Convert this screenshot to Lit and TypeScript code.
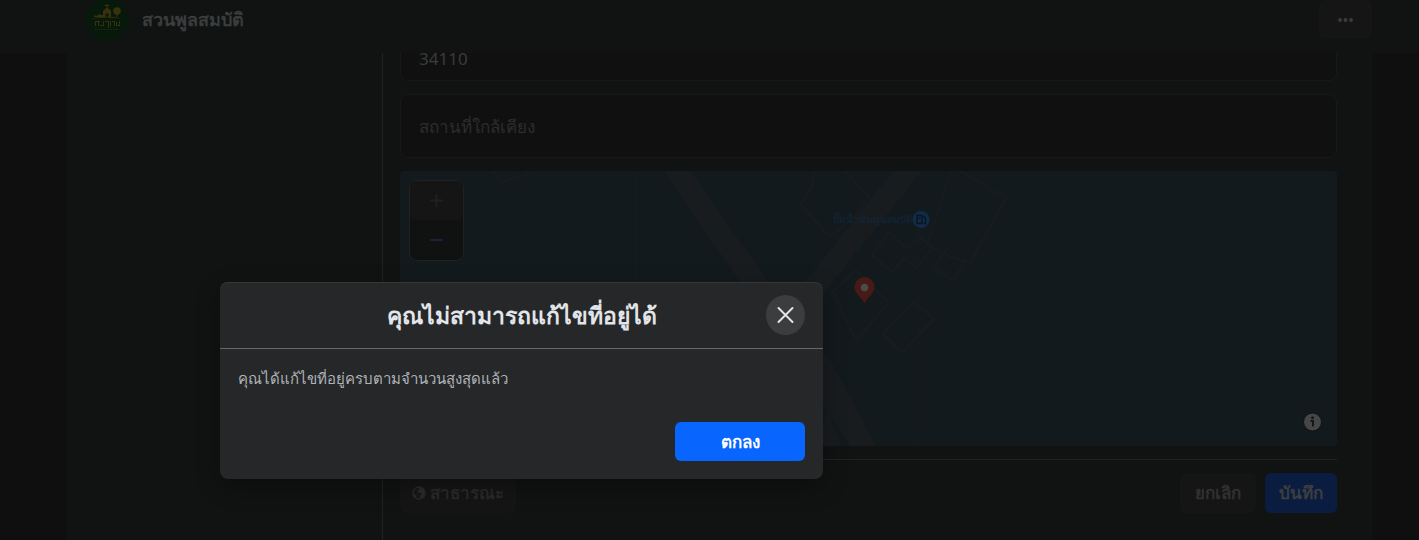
import { LitElement, html, css } from "lit";
import { customElement, state } from "lit/decorators.js";

const fontStack = css`"Noto Sans", "DejaVu Sans", sans-serif`;

@customElement("address-map")
class AddressMap extends LitElement {
  static styles = css`
    :host { display: block; font-family: ${fontStack}; }
    .map { position: relative; height: 275px; overflow: hidden; border-radius: 4px; background: #131a1d; }
    .tiles { position: absolute; top: 0; left: 0; width: 937px; height: 275px; }
    .label { font-size: 10px; fill: #10263c; }
    .zoom { position: absolute; top: 9px; left: 9px; width: 55px; box-sizing: border-box; border: 1px solid #202221; border-radius: 8px; background: #0f1211; overflow: hidden; }
    .zoom button { display: grid; place-items: center; width: 100%; height: 39px; padding: 0; border: 0; background: none; }
    .zoom button[disabled] { background: #151515; border-radius: 6px; }
    .zoom button + button { height: 40px; }
    .info { position: absolute; right: 15px; bottom: 14px; width: 19px; height: 20px; padding: 0; border: 0; background: none; display: grid; place-items: center; }
  `;
  render() {
    return html`<div class="map">
      <svg class="tiles" viewBox="0 0 937 275" aria-hidden="true">
        <g fill="#191c1f">
          <path d="M264 0H291L368 111L432 192L476 275H450L424 237L340 111Z" />
          <path d="M493 0H522L432 111L396 160L405 111Z" />
          <path d="M428 240L441 275H410Z" />
        </g>
        <g fill="none" stroke="#181c1f" stroke-width="2">
          <path d="M94 0L101 11L129 3L127 0" />
          <path d="M415 0L411 17L401 34L430 66L464 38M445 0L469 26L452 48" />
          <path d="M560 0L606 27L570 92L551 86L527 74L551 0M548 77L533 97L553 109L566 88" />
          <path d="M489 61L472 84L492 101L504 87L517 97L533 76L519 66L507 78Z" />
          <path d="M433 121L456 99L489 132L456 169Z" />
          <path d="M514 131L534 148L502 182L483 163Z" />
        </g>
        <g stroke="#161c1e"><path d="M236.500 0V275M518.500 0V275" /></g>
        <text class="label" x="433" y="52">ปั๊มน้ำมันพูนสมบัติ</text>
        <circle cx="521" cy="48.500" r="8.500" fill="#102c49" />
        <path d="M517 44.500h5v8h-5zM518.500 47h2M523.500 45l2 2v5.500h-2" fill="none" stroke="#091521" stroke-width="1.400" />
        <path d="M464.500 133c-2-6-10-10-10-17a10 10 0 0 1 20 0c0 7-8 11-10 17z" fill="#481a15" />
        <circle cx="464.500" cy="116.500" r="3.700" fill="#4b4b4b" />
      </svg>
      <div class="zoom">
        <button disabled aria-label="ซูมเข้า"><svg width="13" height="13" viewBox="0 0 13 13" stroke="#212121" stroke-width="1.800" stroke-linecap="round"><path d="M6.500 1V12M1 6.500H12" /></svg></button>
        <button aria-label="ซูมออก"><svg width="13" height="14" viewBox="0 0 13 14" stroke="#17243a" stroke-width="2" stroke-linecap="round"><path d="M1 7H12" /></svg></button>
      </div>
      <button class="info" aria-label="ข้อมูล"><svg width="19" height="20" viewBox="0 0 19 20"><circle cx="9.500" cy="10" r="9" fill="#464646" stroke="#101314" /><circle cx="9.500" cy="5.800" r="1.500" fill="#141718" /><path d="M7.500 9H10V14.500" fill="none" stroke="#141718" stroke-width="2" /></svg></button>
    </div>`;
  }
}

@customElement("limit-dialog")
class LimitDialog extends LitElement {
  static styles = css`
    :host { display: block; font-family: ${fontStack}; }
    .card { border-radius: 8px; background: #252728; box-shadow: 0 8px 24px rgba(0, 0, 0, 0.3), inset 0 1px 0 #343637; color: #e2e5e9; }
    header { display: grid; grid-template-columns: 39px 1fr 39px; align-items: center; padding: 0 18px; height: 66px; border-bottom: 1px solid #65686c; }
    h2 { grid-column: 2; margin: 0; text-align: center; font-size: 23px; line-height: 26px; font-weight: 700; white-space: nowrap; }
    .close { display: grid; place-items: center; width: 39px; height: 40px; padding: 0; border: 0; border-radius: 50%; background: #3b3d3e; }
    p { margin: 0; padding: 17px 18px 0; font-size: 15px; line-height: 24px; color: #b0b3b8; }
    footer { display: flex; justify-content: flex-end; padding: 32px 18px 18px; }
    .ok { width: 130px; height: 39px; padding: 0; border: 0; border-radius: 6px; background: #0866ff; color: #fff; font: 700 17px/20px ${fontStack}; }
  `;
  render() {
    return html`<section class="card" role="dialog" aria-labelledby="title">
      <header>
        <h2 id="title">คุณไม่สามารถแก้ไขที่อยู่ได้</h2>
        <button class="close" aria-label="ปิด"><svg width="17" height="18" viewBox="0 0 17 18" stroke="#e2e5e9" stroke-width="2" stroke-linecap="round"><path d="M1.500 2L15.500 16M15.500 2L1.500 16" /></svg></button>
      </header>
      <p>คุณได้แก้ไขที่อยู่ครบตามจำนวนสูงสุดแล้ว</p>
      <footer><button class="ok">ตกลง</button></footer>
    </section>`;
  }
}

@customElement("app-root")
class AppRoot extends LitElement {
  @state() private postcode = "34110";

  static styles = css`
    :host { display: block; font-family: ${fontStack}; }
    * { box-sizing: border-box; }
    .page { position: relative; display: flex; flex-direction: column; height: 100vh; overflow: hidden; background: #0f0f0f; color: #3b3c3d; }
    .top { flex: none; display: flex; align-items: flex-start; height: 53px; padding: 0 47px 0 85px; background: #101312; }
    .logo { flex: none; width: 44px; height: 42px; }
    h1 { margin: 7px 0 0 13px; flex: 1; font-size: 18px; line-height: 24px; font-weight: 700; }
    .more { display: grid; place-items: center; width: 53px; height: 39px; padding: 0; border: 0; border-radius: 6px; background: #151515; }
    .body { flex: 1; min-height: 0; display: grid; grid-template-columns: 316px 1fr; margin: 0 47px 0 67px; background: #101312; }
    .side { border-right: 1px solid #202322; }
    .main { display: flex; flex-direction: column; gap: 13px; padding: 0 35px 0 17px; min-width: 0; }
    .field { display: flex; align-items: center; height: 64px; border: 1px solid #171918; border-radius: 8px; background: #101010; }
    .field.cut { height: 28px; border-top: 0; border-radius: 0 0 8px 8px; overflow: hidden; align-items: flex-end; padding-bottom: 9px; }
    input { width: 100%; height: 26px; padding: 0 18px; border: 0; outline: 0; background: none; color: #3a3b3c; font: 17px/24px ${fontStack}; }
    input::placeholder { color: #2c2d2e; opacity: 1; }
    .actions { display: flex; align-items: center; gap: 9px; border-top: 1px solid #202322; padding-top: 13px; }
    .btn { display: flex; align-items: center; justify-content: center; height: 40px; padding: 0; border: 0; border-radius: 6px; background: #151515; color: #303131; font: 700 17px/20px ${fontStack}; white-space: nowrap; }
    .audience { margin-right: auto; gap: 4px; color: #292a2b; width: 116px; }
    .cancel { width: 76px; }
    .save { width: 72px; background: #0a1d40; color: #3c3e40; }
    .modal { position: absolute; top: 282px; left: 220px; width: 603px; }
  `;
  render() {
    return html`<div class="page">
      <header class="top">
        <svg class="logo" viewBox="0 0 44 42" aria-hidden="true">
          <circle cx="22" cy="20" r="21.500" fill="#07190b" />
          <g fill="#3a300c">
            <path d="M18 17V11L22 7L26 11V17H23.500V13.500H20.500V17ZM21.500 4h1v4h-1zM19.500 5h5v1h-5zM9 17l1-2 2 1 2-2 2 1h2v2z" />
            <circle cx="32" cy="11" r="3.800" /><path d="M31.500 13h1v4h-1z" />
            <path d="M5 19Q22 14 38 19Q22 16 5 19Z" />
            <path d="M10 21h5v1h-5zM10 22h1v4h-1zM13 22h1v4h-1zM15 25h3v1h-3zM18 21h1v5h-1zM20 21h4v1h-4zM23 21h1v7h-1zM25 21h1v5h-1zM27 21h3v1h-3zM29 22h1v4h-1zM31 22h1v4h-1zM31 25h3v1h-3zM34 21h1v5h-1z" />
          </g>
          <path d="M10 29.500H34" stroke="#22230b" stroke-dasharray="2 1" />
        </svg>
        <h1>สวนพูลสมบัติ</h1>
        <button class="more" aria-label="เพิ่มเติม"><svg width="15" height="4" viewBox="0 0 15 4" fill="#3b3c3d"><circle cx="2" cy="2" r="1.900" /><circle cx="7.500" cy="2" r="1.900" /><circle cx="13" cy="2" r="1.900" /></svg></button>
      </header>
      <div class="body">
        <aside class="side"></aside>
        <main class="main">
          <label class="field cut"><input aria-label="รหัสไปรษณีย์" .value=${this.postcode} /></label>
          <label class="field"><input aria-label="สถานที่ใกล้เคียง" placeholder="สถานที่ใกล้เคียง" /></label>
          <address-map></address-map>
          <div class="actions">
            <button class="btn audience"><svg width="14" height="14" viewBox="0 0 14 14"><circle cx="7" cy="7" r="6.200" fill="#171818" stroke="#2b2c2d" stroke-width="1.200" /><path d="M6 1.500Q11 0 13 5Q13 10 9 12.500L8 10L10 8L8.500 6.500L6.500 7L5.500 5L7.500 3.500ZM2 8L4.500 9.500L4 11.500Q2 10 2 8Z" fill="#2b2c2d" /></svg>สาธารณะ</button>
            <button class="btn cancel">ยกเลิก</button>
            <button class="btn save">บันทึก</button>
          </div>
        </main>
      </div>
      <limit-dialog class="modal"></limit-dialog>
    </div>`;
  }
}
